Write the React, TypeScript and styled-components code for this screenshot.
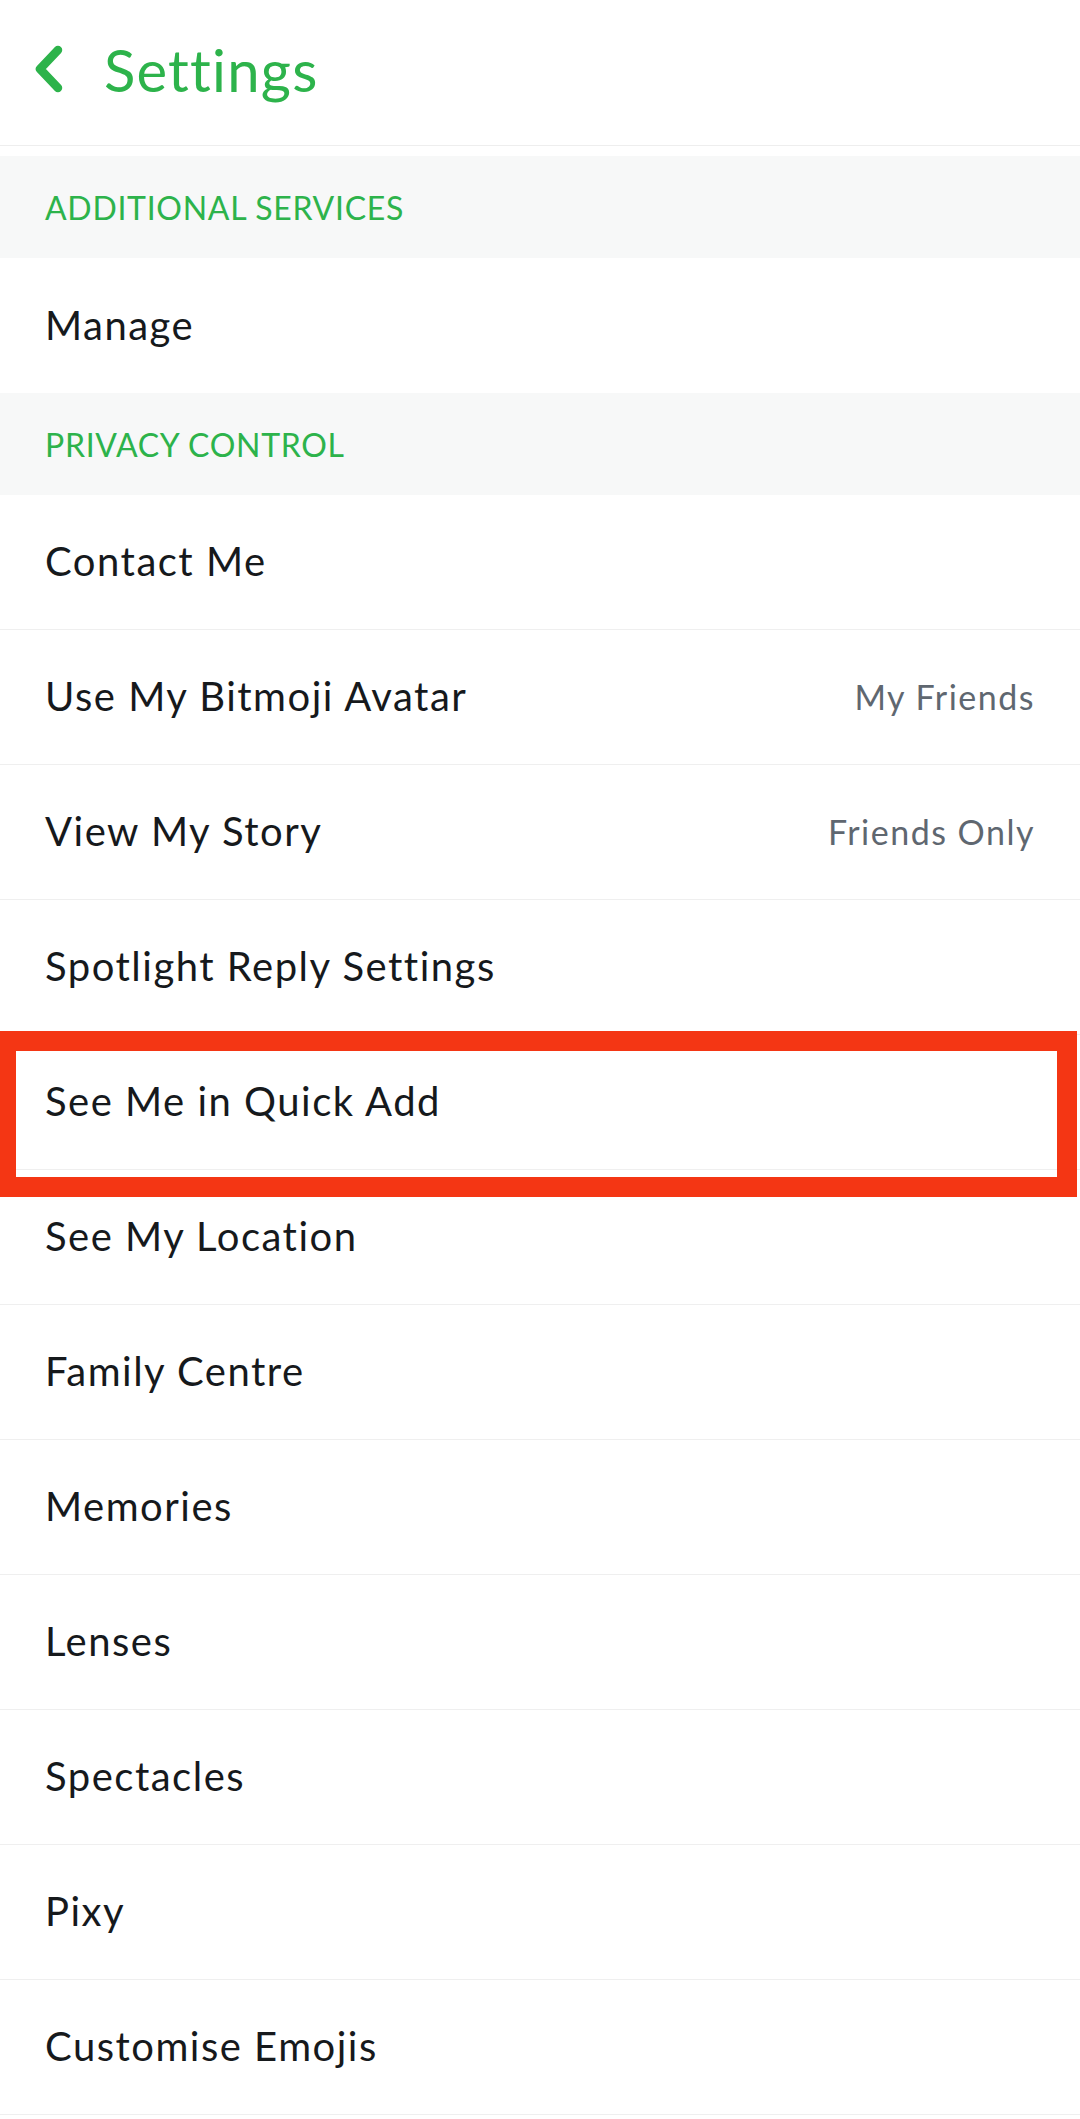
import React from 'react';
import styled, { createGlobalStyle } from 'styled-components';

type Item = { label: string; value?: string; highlighted?: boolean };

const privacyItems: Item[] = [
  { label: 'Contact Me' },
  { label: 'Use My Bitmoji Avatar', value: 'My Friends' },
  { label: 'View My Story', value: 'Friends Only' },
  { label: 'Spotlight Reply Settings' },
  { label: 'See Me in Quick Add', highlighted: true },
  { label: 'See My Location' },
  { label: 'Family Centre' },
  { label: 'Memories' },
  { label: 'Lenses' },
  { label: 'Spectacles' },
  { label: 'Pixy' },
  { label: 'Customise Emojis' },
];

const GlobalStyle = createGlobalStyle`
  html, body {
    margin: 0;
    padding: 0;
    background: #ffffff;
  }
  body {
    font-family: Lato, "Noto Sans", sans-serif;
    -webkit-font-smoothing: antialiased;
  }
`;

const BackChevron = () => (
  <svg width="34" height="52" viewBox="0 0 34 52" fill="none">
    <path d="M26 6 L8 25 L26 44" stroke="#2db34b" strokeWidth="8.5" strokeLinecap="round" strokeLinejoin="round" />
  </svg>
);

export default function App() {
  return (
    <Page>
      <GlobalStyle />
      <Header>
        <BackChevron />
        <Title>Settings</Title>
      </Header>
      <Gap />
      <SectionTitle>ADDITIONAL SERVICES</SectionTitle>
      <Row $last>
        <Label>Manage</Label>
      </Row>
      <SectionTitle>PRIVACY CONTROL</SectionTitle>
      {privacyItems.map((item) => (
        <Row key={item.label}>
          <Label>{item.label}</Label>
          {item.value && <Value>{item.value}</Value>}
          {item.highlighted && <Highlight />}
        </Row>
      ))}
    </Page>
  );
}

const Page = styled.div`
  width: 1080px;
  min-height: 2119px;
  background: #ffffff;
  overflow: hidden;
`;

const Header = styled.div`
  height: 146px;
  display: flex;
  align-items: center;
  gap: 38px;
  padding: 0 0 6px 32px;
  box-sizing: border-box;
  border-bottom: 1px solid #eeeeee;
`;

const Title = styled.h1`
  margin: 0;
  font-size: 58px;
  font-weight: 400;
  letter-spacing: 1.2px;
  color: #2db34b;
`;

const Gap = styled.div`
  height: 10px;
`;

const SectionTitle = styled.div`
  height: 102px;
  display: flex;
  align-items: center;
  padding: 0 45px;
  background: #f7f8f8;
  color: #2db34b;
  font-size: 32px;
  letter-spacing: 0.7px;
`;

const Row = styled.div<{ $last?: boolean }>`
  position: relative;
  height: 135px;
  box-sizing: border-box;
  display: flex;
  align-items: center;
  justify-content: space-between;
  padding: 0 45px 2px 45px;
  border-bottom: ${({ $last }) => ($last ? 'none' : '1px solid #efefef')};
`;

const Label = styled.span`
  font-size: 40px;
  letter-spacing: 1.5px;
  color: #16191c;
`;

const Value = styled.span`
  font-size: 34px;
  letter-spacing: 1.5px;
  color: #5f6770;
`;

const Highlight = styled.div`
  position: absolute;
  top: -4px;
  left: -4px;
  width: 1081px;
  height: 166px;
  box-sizing: border-box;
  border: 20px solid #f43614;
  pointer-events: none;
`;
